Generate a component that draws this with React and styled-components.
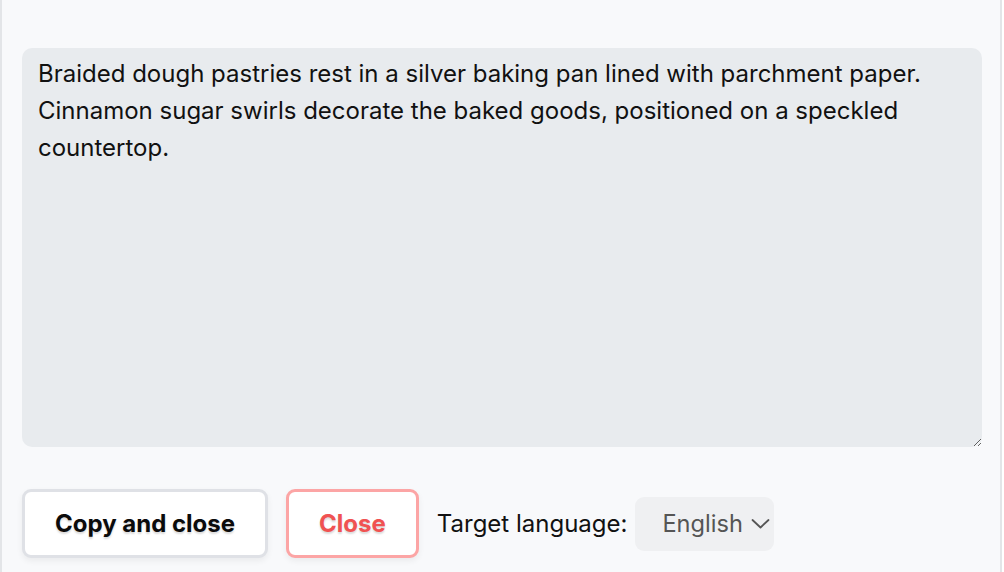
import React from 'react';
import styled, { createGlobalStyle } from 'styled-components';

const Global = createGlobalStyle`
    html, body {
        margin: 0;
        padding: 0;
        background: #ffffff;
    }
    body {
        font-family: Inter, "Noto Sans", sans-serif;
        -webkit-font-smoothing: antialiased;
    }
`

const Page = styled.div`
    width: 1002px;
    height: 572px;
    box-sizing: border-box;
    background: #f8f9fb;
    border-left: 2px solid #e3e5e8;
    border-right: 2px solid #e3e5e8;
    padding: 48px 18px 0 20px;
    display: flex;
    flex-direction: column;
`

const Description = styled.textarea`
    display: block;
    width: 100%;
    height: 399px;
    box-sizing: border-box;
    margin: 0;
    border: none;
    outline: none;
    border-radius: 10px;
    background: #e8ebee;
    color: #111;
    font-family: Inter, "Noto Sans", sans-serif;
    font-size: 24px;
    line-height: 37px;
    padding: 7px 16px;
    resize: vertical;
`

const Actions = styled.div`
    display: flex;
    align-items: center;
    margin-top: 42px;
`

const Button = styled.button`
    height: 69px;
    box-sizing: border-box;
    padding: 0 30px;
    margin-right: 18px;
    background: #ffffff;
    border: 3px solid ${p => p.$danger ? '#fca5a5' : '#dfe1e6'};
    border-radius: 9px;
    color: ${p => p.$danger ? '#f05252' : '#0b0b0b'};
    font-family: Inter, "Noto Sans", sans-serif;
    font-size: 24px;
    font-weight: 700;
    text-shadow: 0 2px 2px rgba(0, 0, 0, 0.15);
    box-shadow: 0 3px 6px rgba(0, 0, 0, 0.06);
    cursor: pointer;
`

const Label = styled.span`
    font-size: 24px;
    color: #111;
    margin-right: 8px;
`

const Select = styled.div`
    display: flex;
    align-items: center;
    height: 54px;
    width: 139px;
    box-sizing: border-box;
    padding: 0 4px 0 27px;
    background: #eff0f2;
    border-radius: 9px;
    color: #555;
    font-size: 23.6px;
    gap: 8px;

    svg {
        flex-shrink: 0;
    }
`

const Chevron = () => (
    <svg width="19" height="19" viewBox="0 0 19 19" fill="none">
        <path d="M1.5 6 L9.5 13.5 L17.5 6" stroke="#555" strokeWidth="1.8" strokeLinecap="round" strokeLinejoin="round" />
    </svg>
)

export default function App() {
    return (
        <Page>
            <Global />
            <Description
                defaultValue="Braided dough pastries rest in a silver baking pan lined with parchment paper. Cinnamon sugar swirls decorate the baked goods, positioned on a speckled countertop."
            />
            <Actions>
                <Button>Copy and close</Button>
                <Button $danger>Close</Button>
                <Label>Target language:</Label>
                <Select>
                    English
                    <Chevron />
                </Select>
            </Actions>
        </Page>
    )
}
